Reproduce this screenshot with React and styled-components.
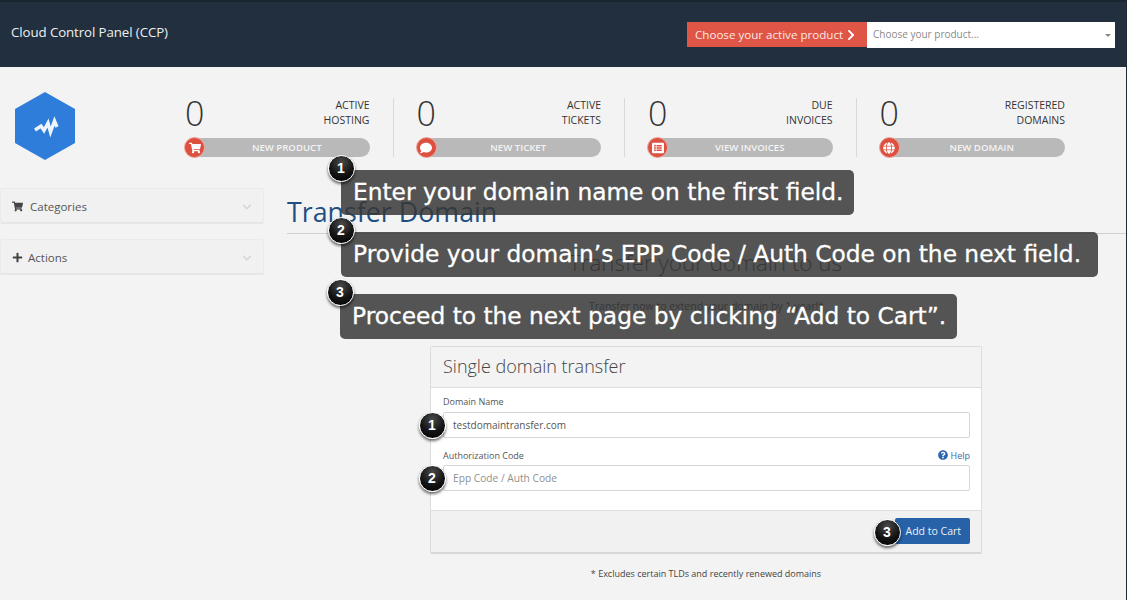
import React from "react";
import styled, { createGlobalStyle } from "styled-components";
import { FaShoppingCart, FaComment, FaListAlt, FaGlobe, FaChevronRight, FaChevronDown, FaPlus, FaQuestionCircle } from "react-icons/fa";

const Global = createGlobalStyle`
  html, body { margin: 0; padding: 0; background: #f3f3f3; }
  * { box-sizing: border-box; }
  body { font-family: "Open Sans", "Liberation Sans", sans-serif; overflow: hidden; }
`;

const Page = styled.div`
  position: relative;
  width: 1127px;
  height: 600px;
  overflow: hidden;
  background: #f3f3f3;
  border-right: 1px solid #1d2a38;
`;
const Header = styled.header`
  height: 67px;
  background: #212f3f;
  border-top: 2px solid #1a2532;
  display: flex;
  align-items: center;
  justify-content: space-between;
  padding: 0 11px 6px 11px;
`;
const Brand = styled.div`
  color: #eef0ee;
  font-size: 13.3px;
  letter-spacing: -0.1px;
`;
const Chooser = styled.div`
  display: flex;
  align-items: flex-start;
  margin-top: 7px;
`;
const ChooseLabel = styled.div`
  width: 180px;
  height: 25px;
  background: #df5546;
  color: #fbe9e4;
  font-size: 11.6px;
  display: flex;
  align-items: center;
  gap: 2px;
  padding-left: 8px;
  svg { font-size: 12px; color: #fff; }
`;
const Select = styled.div`
  position: relative;
  width: 248px;
  height: 26px;
  background: #fff;
  color: #8a8a8a;
  font-size: 10px;
  display: flex;
  align-items: center;
  padding: 0 0 2px 6px;
  &::after {
    content: "";
    position: absolute;
    right: 4px;
    top: 12px;
    border-left: 3px solid transparent;
    border-right: 3px solid transparent;
    border-top: 3px solid #888;
  }
`;
const Stats = styled.section`
  display: flex;
  height: 121px;
  padding: 25px 0 0 15px;
`;
const Logo = styled.svg`
  width: 60px;
  height: 68px;
  flex: none;
  margin-right: 87px;
`;
const Stat = styled.div`
  width: 231.5px;
  height: 59px;
  margin-top: 6px;
  padding: 0 23px;
  border-right: ${p => (p.$last ? "none" : "1px solid #d9d9d9")};
  display: flex;
  flex-direction: column;
  justify-content: space-between;
`;
const StatTop = styled.div`
  display: flex;
  justify-content: space-between;
  align-items: flex-start;
`;
const Count = styled.div`
  font-size: 34px;
  font-weight: 300;
  line-height: 31px;
  color: #333;
`;
const StatLabel = styled.div`
  text-align: right;
  font-size: 10.5px;
  line-height: 15px;
  color: #333;
  text-transform: uppercase;
`;
const Pill = styled.div`
  position: relative;
  height: 19px;
  border-radius: 10px;
  background: #b9b9b9;
  color: #f4f4f4;
  font-size: 9.6px;
  font-weight: 600;
  text-transform: uppercase;
  display: flex;
  align-items: center;
  justify-content: center;
  padding-left: 19px;
`;
const PillIcon = styled.span`
  position: absolute;
  left: -1px;
  top: -1px;
  width: 21px;
  height: 21px;
  border-radius: 50%;
  background: #dd4f3e;
  border: 1px solid #eda89f;
  color: #fff;
  font-size: 12px;
  display: flex;
  align-items: center;
  justify-content: center;
`;
const Body = styled.div`
  display: flex;
  align-items: flex-start;
`;
const Sidebar = styled.aside`
  width: 264px;
  flex: none;
  display: flex;
  flex-direction: column;
  gap: 15px;
`;
const SideItem = styled.div`
  height: 36px;
  background: #f1f1f1;
  border: 1px solid #ebebeb;
  border-bottom: 2px solid #e6e6e6;
  border-radius: 2px;
  display: flex;
  align-items: center;
  padding: 2px 11px 0;
  color: #555;
  font-size: 11.5px;
  gap: ${p => p.$gap}px;
  svg.lead { color: #444; font-size: 11px; }
`;
const SideChevron = styled(FaChevronDown)`
  margin-left: auto;
  color: #d7d7d7;
  font-size: 10px;
`;
const Main = styled.main`
  flex: 1;
  min-width: 0;
  margin-left: 23px;
`;
const Title = styled.h1`
  margin: 0;
  height: 46px;
  padding-top: 6px;
  font-size: 26.8px;
  line-height: 36px;
  font-weight: 400;
  color: #1d4f82;
  border-bottom: 1px solid #cfcfcf;
`;
const Lead = styled.h2`
  margin: 16px 0 0;
  font-size: 22.4px;
  line-height: 26px;
  font-weight: 300;
  color: #333;
  text-align: center;
  padding-right: 2px;
`;
const SubLead = styled.p`
  margin: 23px 0 0;
  font-size: 10.5px;
  line-height: 14px;
  color: #333;
  text-align: center;
`;
const Card = styled.div`
  width: 552px;
  height: 208px;
  margin: 33px 0 0 143px;
  background: #fff;
  border: 1px solid #dcdcdc;
  border-bottom: 2px solid #d8d8d8;
  border-radius: 2px;
  display: flex;
  flex-direction: column;
`;
const CardHead = styled.div`
  height: 41px;
  background: #f3f3f3;
  border-bottom: 1px solid #ddd;
  padding: 0 12px 2px;
  display: flex;
  align-items: center;
  font-size: 18px;
  font-weight: 300;
  color: #444;
`;
const CardBody = styled.div`
  flex: 1;
  padding: 4px 11px 0 12px;
  display: flex;
  flex-direction: column;
`;
const LabelRow = styled.div`
  height: ${p => p.$h}px;
  padding-bottom: ${p => p.$pb}px;
  display: flex;
  justify-content: space-between;
  align-items: center;
  font-size: 9px;
  color: #555;
`;
const HelpLink = styled.span`
  color: #3d6b9f;
  display: flex;
  align-items: center;
  gap: 3px;
  svg { color: #2a66ad; font-size: 10px; }
`;
const Field = styled.div`
  height: 26px;
  border: 1px solid #d6d6d6;
  border-radius: 2px;
  background: #fff;
  display: flex;
  align-items: center;
  padding-left: 9px;
  font-size: ${p => (p.$placeholder ? 10.2 : 10)}px;
  color: ${p => (p.$placeholder ? "#8f8f8f" : "#555")};
  margin-bottom: ${p => p.$gap || 0}px;
`;
const CardFoot = styled.div`
  height: 42px;
  background: #f1f1f1;
  border-top: 1px solid #ddd;
  padding: 0 11px 2px 0;
  display: flex;
  align-items: center;
  justify-content: flex-end;
`;
const CartButton = styled.div`
  width: 75px;
  height: 26px;
  background: #2762a8;
  border-radius: 2px;
  color: #e9f0f8;
  font-size: 10.5px;
  display: flex;
  align-items: center;
  justify-content: flex-end;
  padding-right: 9px;
`;
const Footnote = styled.p`
  margin: 14px 0 0 143px;
  width: 552px;
  text-align: center;
  font-size: 9px;
  line-height: 12px;
  color: #444;
`;
const Callout = styled.div`
  position: absolute;
  left: ${p => p.$x}px;
  top: ${p => p.$y}px;
  width: ${p => p.$w}px;
  height: 45px;
  border-radius: 5px;
  background: rgba(55, 55, 55, 0.85);
  color: #fff;
  font-family: "DejaVu Sans", sans-serif;
  font-size: 23.3px;
  line-height: 44px;
  padding-left: 12px;
  white-space: nowrap;
  -webkit-text-stroke: 0.3px #fff;
`;
const Badge = styled.div`
  position: absolute;
  left: ${p => p.$x - 13.5}px;
  top: ${p => p.$y - 13.5}px;
  width: 27px;
  height: 27px;
  border-radius: 50%;
  background: radial-gradient(circle at 50% 25%, #4a4a4a 0%, #141414 55%, #000 100%);
  border: 1.5px solid #fff;
  box-shadow: 0 2px 3px rgba(0, 0, 0, 0.6);
  color: #fff;
  font-family: "Liberation Sans", sans-serif;
  font-weight: 700;
  font-size: 14px;
  display: flex;
  align-items: center;
  justify-content: center;
`;

const stats = [
  { l: ["Active", "Hosting"], a: "New Product", i: <FaShoppingCart /> },
  { l: ["Active", "Tickets"], a: "New Ticket", i: <FaComment /> },
  { l: ["Due", "Invoices"], a: "View Invoices", i: <FaListAlt /> },
  { l: ["Registered", "Domains"], a: "New Domain", i: <FaGlobe /> },
];
const callouts = [
  { x: 341, y: 170, w: 513, t: "Enter your domain name on the first field." },
  { x: 341, y: 232, w: 757, t: "Provide your domain’s EPP Code / Auth Code on the next field." },
  { x: 340, y: 294, w: 617, t: "Proceed to the next page by clicking “Add to Cart”." },
];
const badges = [
  { x: 341, y: 168, n: 1 }, { x: 341, y: 230, n: 2 }, { x: 340, y: 292, n: 3 },
  { x: 432, y: 425, n: 1 }, { x: 432, y: 478, n: 2 }, { x: 887, y: 532, n: 3 },
];

export default function App() {
  return (
    <Page>
      <Global />
      <Header>
        <Brand>Cloud Control Panel (CCP)</Brand>
        <Chooser>
          <ChooseLabel>Choose your active product <FaChevronRight /></ChooseLabel>
          <Select>Choose your product...</Select>
        </Chooser>
      </Header>
      <Stats>
        <Logo viewBox="0 0 60 68">
          <polygon points="30,0 60,17 60,51 30,68 0,51 0,17" fill="#2f7ddb" />
          <polyline points="20,38 26,34 29,38.5 33,31 35.5,40 39.5,29 42,35" fill="none" stroke="#eef5fc" strokeWidth="3.4" strokeLinejoin="miter" strokeMiterlimit="6" />
        </Logo>
        {stats.map((s, i) => (
          <Stat key={s.a} $last={i === 3}>
            <StatTop>
              <Count>0</Count>
              <StatLabel>{s.l[0]}<br />{s.l[1]}</StatLabel>
            </StatTop>
            <Pill><PillIcon>{s.i}</PillIcon>{s.a}</Pill>
          </Stat>
        ))}
      </Stats>
      <Body>
        <Sidebar>
          <SideItem $gap={7}><FaShoppingCart className="lead" />Categories<SideChevron /></SideItem>
          <SideItem $gap={5}><FaPlus className="lead" />Actions<SideChevron /></SideItem>
        </Sidebar>
        <Main>
          <Title>Transfer Domain</Title>
          <Lead>Transfer your domain to us</Lead>
          <SubLead>Transfer now to extend your domain by 1 year!*</SubLead>
          <Card>
            <CardHead>Single domain transfer</CardHead>
            <CardBody>
              <LabelRow $h={20} $pb={1}>Domain Name</LabelRow>
              <Field $gap={9}>testdomaintransfer.com</Field>
              <LabelRow $h={18} $pb={2}><span>Authorization Code</span><HelpLink><FaQuestionCircle />Help</HelpLink></LabelRow>
              <Field $placeholder>Epp Code / Auth Code</Field>
            </CardBody>
            <CardFoot><CartButton>Add to Cart</CartButton></CardFoot>
          </Card>
          <Footnote>* Excludes certain TLDs and recently renewed domains</Footnote>
        </Main>
      </Body>
      {callouts.map(c => <Callout key={c.t} $x={c.x} $y={c.y} $w={c.w}>{c.t}</Callout>)}
      {badges.map((b, i) => <Badge key={i} $x={b.x} $y={b.y}>{b.n}</Badge>)}
    </Page>
  );
}
